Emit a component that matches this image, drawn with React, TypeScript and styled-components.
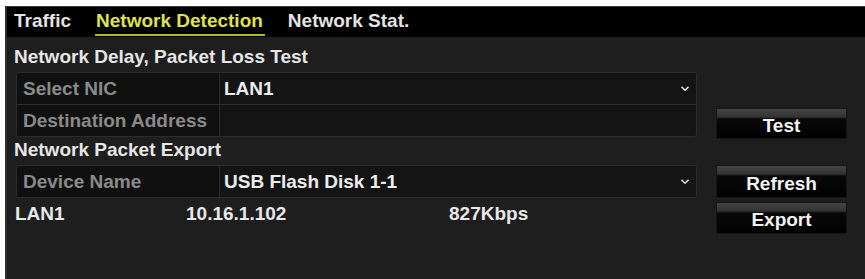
import React from "react";
import styled, { createGlobalStyle } from "styled-components";

const GlobalStyle = createGlobalStyle`
	html, body {
		margin: 0;
		padding: 0;
		background: #ffffff;
	}
	body {
		font-family: "Liberation Sans", Arial, sans-serif;
	}
`;

const Panel = styled.div`
	margin: 6px 0 0 5px;
	width: 860px;
	height: 273px;
	background: #1e1e1e;
	border-left: 2px solid #2e2e2e;
	box-sizing: border-box;
	overflow: hidden;
`;

const TabBar = styled.div`
	height: 31px;
	background: #000;
	display: flex;
	gap: 25px;
	padding-left: 7px;
	border-top: 1px solid #3a3a3a;
	box-sizing: border-box;
`;

const Tab = styled.div<{ $active?: boolean }>`
	position: relative;
	font-size: 19px;
	font-weight: bold;
	line-height: 28px;
	color: ${(p) => (p.$active ? "#dfe34a" : "#e4e4e4")};
	&::after {
		content: "";
		display: ${(p) => (p.$active ? "block" : "none")};
		position: absolute;
		left: -1px;
		right: -2px;
		bottom: 1px;
		height: 2px;
		background: #b7b526;
	}
`;

const Body = styled.div`
	display: grid;
	grid-template-columns: 681px 131px;
	column-gap: 19px;
	padding-left: 9px;
`;

const Heading = styled.div<{ $top: number; $bottom: number }>`
	grid-column: 1 / -1;
	margin: ${(p) => p.$top}px 0 ${(p) => p.$bottom}px -2px;
	font-size: 19px;
	font-weight: bold;
	line-height: 22px;
	color: #e6e6e6;
`;

const Table = styled.div`
	border: 1px solid #2c2c2c;
	border-radius: 3px;
	overflow: hidden;
`;

const Row = styled.div<{ $h: number }>`
	display: grid;
	grid-template-columns: 203px 1fr;
	height: ${(p) => p.$h}px;
	& + & {
		border-top: 1px solid #2e2e2e;
	}
`;

const Label = styled.div`
	background: #101010;
	border-right: 1px solid #2a2a2a;
	color: #8a8a8a;
	font-size: 19px;
	font-weight: bold;
	display: flex;
	align-items: center;
	padding-left: 6px;
`;

const Value = styled.div`
	background: #141414;
	color: #ececec;
	font-size: 19px;
	font-weight: bold;
	display: flex;
	align-items: center;
	justify-content: space-between;
	padding: 0 7px 0 4px;
`;

const Chevron = () => (
	<svg width="8" height="5" viewBox="0 0 8 5">
		<path d="M0.5 0.8 L4 4.2 L7.5 0.8" stroke="#d8d8d8" strokeWidth="1.6" fill="none" />
	</svg>
);

const ButtonStack = styled.div<{ $end?: boolean }>`
	display: flex;
	flex-direction: column;
	gap: 4px;
	align-self: ${(p) => (p.$end ? "end" : "start")};
	margin-bottom: ${(p) => (p.$end ? "-2px" : "0")};
`;

const Button = styled.div<{ $h: number }>`
	height: ${(p) => p.$h}px;
	background: linear-gradient(
		to bottom,
		#444 0px,
		#333 8px,
		#080808 10px,
		#000 100%
	);
	border: 1px solid #151515;
	box-sizing: border-box;
	color: #f2f2f2;
	font-size: 19px;
	font-weight: bold;
	display: flex;
	align-items: center;
	justify-content: center;
	padding-top: 4px;
`;

const DataRow = styled.div`
	display: grid;
	grid-template-columns: 171px 263px auto;
	margin: 4px 0 0 -1px;
	line-height: 24px;
	font-size: 19px;
	font-weight: bold;
	color: #e8e8e8;
`;

export default function App() {
	return (
		<>
			<GlobalStyle />
			<Panel>
				<TabBar>
					<Tab>Traffic</Tab>
					<Tab $active>Network Detection</Tab>
					<Tab>Network Stat.</Tab>
				</TabBar>
				<Body>
					<Heading $top={9} $bottom={4}>
						Network Delay, Packet Loss Test
					</Heading>
					<Table>
						<Row $h={31}>
							<Label>Select NIC</Label>
							<Value>
								LAN1
								<Chevron />
							</Value>
						</Row>
						<Row $h={31}>
							<Label>Destination Address</Label>
							<Value />
						</Row>
					</Table>
					<ButtonStack $end>
						<Button $h={31}>Test</Button>
					</ButtonStack>
					<Heading $top={2} $bottom={4}>
						Network Packet Export
					</Heading>
					<div>
						<Table>
							<Row $h={31}>
								<Label>Device Name</Label>
								<Value>
									USB Flash Disk 1-1
									<Chevron />
								</Value>
							</Row>
						</Table>
						<DataRow>
							<span>LAN1</span>
							<span>10.16.1.102</span>
							<span>827Kbps</span>
						</DataRow>
					</div>
					<ButtonStack>
						<Button $h={33}>Refresh</Button>
						<Button $h={32}>Export</Button>
					</ButtonStack>
				</Body>
			</Panel>
		</>
	);
}
